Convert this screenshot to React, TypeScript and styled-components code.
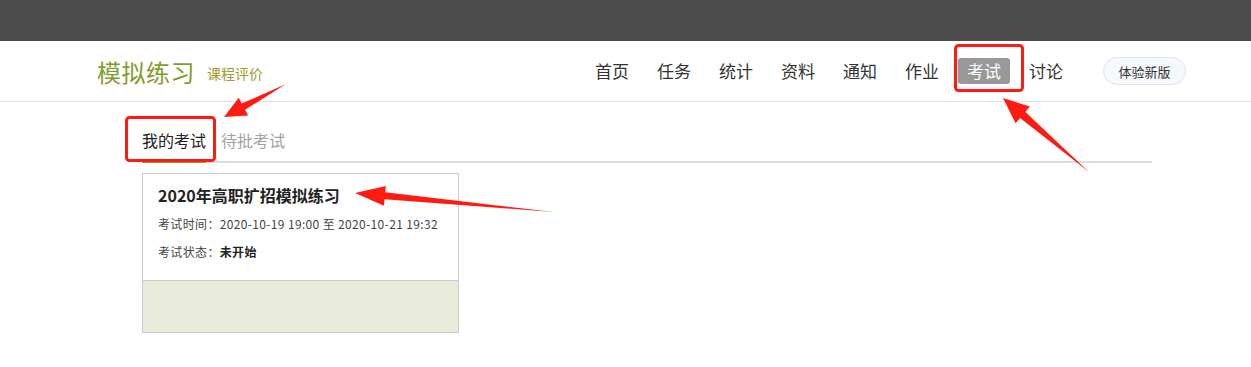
import styled, { createGlobalStyle } from "styled-components";

const GlobalStyle = createGlobalStyle`
  body {
    margin: 0;
    background: #fff;
    font-family: "Noto Sans CJK SC", "Noto Sans", sans-serif;
    color: #333;
  }
`;

const navItems = ["首页", "任务", "统计", "资料", "通知", "作业", "考试", "讨论"];

type Pt = [number, number];

const arrowPoints = (tail: Pt, tip: Pt, shaft = 8, head = 24, headLen = 26) => {
  const dx = tip[0] - tail[0];
  const dy = tip[1] - tail[1];
  const len = Math.hypot(dx, dy);
  const ux = dx / len;
  const uy = dy / len;
  const nx = -uy;
  const ny = ux;
  const bx = tip[0] - ux * headLen;
  const by = tip[1] - uy * headLen;
  const pts: Pt[] = [
    tail,
    [bx + (nx * shaft) / 2, by + (ny * shaft) / 2],
    [bx + (nx * head) / 2, by + (ny * head) / 2],
    tip,
    [bx - (nx * head) / 2, by - (ny * head) / 2],
    [bx - (nx * shaft) / 2, by - (ny * shaft) / 2],
  ];
  return pts.map((p) => p.join(",")).join(" ");
};

export default function App() {
  return (
    <Page>
      <GlobalStyle />
      <TopBar />
      <Header>
        <Title>模拟练习</Title>
        <SubLink>课程评价</SubLink>
        <Nav>
          {navItems.map((n) => (
            <NavItem key={n} $active={n === "考试"}>
              {n}
            </NavItem>
          ))}
        </Nav>
        <NewVersion>体验新版</NewVersion>
      </Header>
      <Main>
        <Tabs>
          <Tab $active>我的考试</Tab>
          <Tab>待批考试</Tab>
        </Tabs>
        <Card>
          <CardBody>
            <CardTitle>2020年高职扩招模拟练习</CardTitle>
            <Meta>考试时间：2020-10-19 19:00 至 2020-10-21 19:32</Meta>
            <Meta>
              考试状态：<b>未开始</b>
            </Meta>
          </CardBody>
          <CardFoot />
        </Card>
      </Main>
      <Annotations width="1251" height="367" viewBox="0 0 1251 367">
        <rect x="955.5" y="45.5" width="67" height="45" rx="3" fill="none" stroke="#ff1a12" strokeWidth="3" />
        <rect x="126.5" y="117.5" width="88" height="43" rx="3" fill="none" stroke="#ff1a12" strokeWidth="3" />
        <polygon points={arrowPoints([286, 84], [224, 117], 7, 20, 22)} fill="#ff1a12" />
        <polygon points={arrowPoints([1089, 172], [1003, 98], 8, 22, 26)} fill="#ff1a12" />
        <polygon points={arrowPoints([554, 212], [355, 193], 7, 20, 30)} fill="#ff1a12" />
      </Annotations>
    </Page>
  );
}

const Page = styled.div`
  position: relative;
  width: 1251px;
  height: 367px;
  overflow: hidden;
`;

const TopBar = styled.div`
  height: 41px;
  background: #4b4b4b;
`;

const Header = styled.div`
  height: 60px;
  display: flex;
  align-items: center;
  padding: 0 65px 0 97px;
  border-bottom: 1px solid #e3e3e3;
`;

const Title = styled.div`
  font-size: 24px;
  color: #7f9d2c;
  letter-spacing: 0.5px;
`;

const SubLink = styled.div`
  font-size: 14px;
  color: #9c9d2c;
  margin: 4px 0 0 12px;
`;

const Nav = styled.div`
  margin-left: auto;
  display: flex;
  gap: 10px;
`;

const NavItem = styled.div<{ $active?: boolean }>`
  font-size: 17px;
  line-height: 26px;
  padding: 0 9px;
  border-radius: 3px;
  color: ${(p) => (p.$active ? "#fff" : "#333")};
  background: ${(p) => (p.$active ? "#999" : "transparent")};
`;

const NewVersion = styled.div`
  margin-left: 31px;
  height: 26px;
  padding: 0 14.5px;
  display: flex;
  align-items: center;
  font-size: 13px;
  color: #333;
  background: #f5f8fc;
  border: 1px solid #dde4ee;
  border-radius: 14px;
`;

const Main = styled.div`
  width: 1010px;
  margin-left: 142px;
  padding-top: 26px;
`;

const Tabs = styled.div`
  display: flex;
  gap: 15px;
  border-bottom: 2px solid #ddd;
`;

const Tab = styled.div<{ $active?: boolean }>`
  font-size: 16px;
  line-height: 24px;
  padding-bottom: 9px;
  margin-bottom: -2px;
  color: ${(p) => (p.$active ? "#222" : "#a2a2a2")};
  border-bottom: 2px solid ${(p) => (p.$active ? "#85a12a" : "transparent")};
`;

const Card = styled.div`
  width: 315px;
  margin-top: 10px;
  border: 1px solid #ccc;
`;

const CardBody = styled.div`
  height: 106px;
  padding: 9px 0 0 15px;
  box-sizing: border-box;
`;

const CardTitle = styled.div`
  font-size: 16px;
  font-weight: bold;
  color: #222;
  line-height: 24px;
  margin-bottom: 8px;
`;

const Meta = styled.div`
  font-size: 12px;
  letter-spacing: 0.35px;
  color: #444;
  line-height: 18px;
  margin-bottom: 10px;

  b {
    color: #222;
  }
`;

const CardFoot = styled.div`
  height: 51px;
  background: #e9ecda;
  border-top: 1px solid #ccc;
`;

const Annotations = styled.svg`
  position: absolute;
  left: 0;
  top: 0;
  pointer-events: none;
`;
